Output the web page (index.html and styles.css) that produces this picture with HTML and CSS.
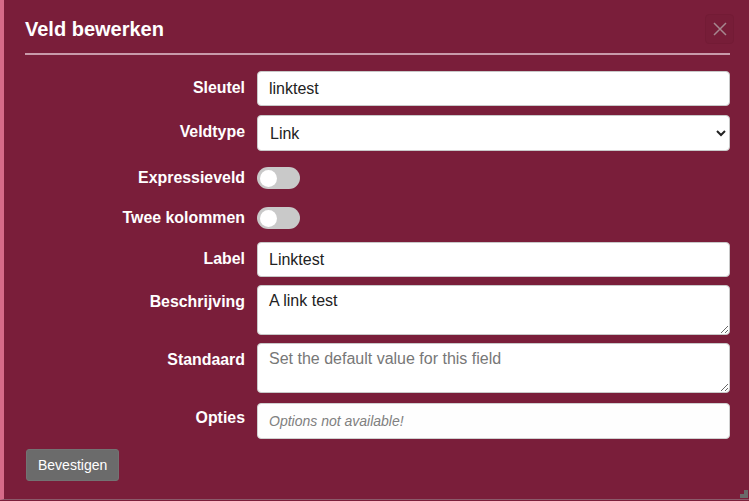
FILE: index.html
```html
<!DOCTYPE html>
<html lang="nl">
<head>
<meta charset="utf-8">
<title>Veld bewerken</title>
<link rel="stylesheet" href="styles.css">
</head>
<body>
<div class="modal">
  <div class="modal-header">
    <h1 class="modal-title">Veld bewerken</h1>
    <button class="close-btn" type="button" aria-label="Sluiten">
      <svg width="14" height="14" viewBox="0 0 14 14"><path d="M1 1 L13 13 M13 1 L1 13" stroke="#a6878f" stroke-width="1.5" fill="none"/></svg>
    </button>
  </div>
  <form class="form">
    <div class="row row-first">
      <label class="lbl">Sleutel</label>
      <input class="ctl" type="text" value="linktest">
    </div>
    <div class="row row-select">
      <label class="lbl">Veldtype</label>
      <select class="ctl sel"><option>Link</option></select>
    </div>
    <div class="row row-toggle t1">
      <label class="lbl">Expressieveld</label>
      <span class="toggle"><span class="knob"></span></span>
    </div>
    <div class="row row-toggle t2">
      <label class="lbl">Twee kolommen</label>
      <span class="toggle"><span class="knob"></span></span>
    </div>
    <div class="row row-label">
      <label class="lbl">Label</label>
      <input class="ctl" type="text" value="Linktest">
    </div>
    <div class="row row-area">
      <label class="lbl">Beschrijving</label>
      <textarea class="ctl area">A link test</textarea>
    </div>
    <div class="row row-area">
      <label class="lbl">Standaard</label>
      <textarea class="ctl area" placeholder="Set the default value for this field"></textarea>
    </div>
    <div class="row row-opt">
      <label class="lbl">Opties</label>
      <input class="ctl opt" type="text" placeholder="Options not available!" readonly>
    </div>
    <div class="actions">
      <button class="confirm" type="button">Bevestigen</button>
    </div>
  </form>
  <span class="grip"></span>
</div>
</body>
</html>
```
FILE: styles.css
```css
html, body {
  margin: 0;
  padding: 0;
  background: #7a1e3a;
  font-family: "Liberation Sans", Arial, sans-serif;
}
.modal {
  position: relative;
  box-sizing: border-box;
  height: 500px;
  border-left: 4px solid #d66b89;
  border-bottom: 1px solid #8a5a6a;
  background: #7a1e3a;
  padding: 14px 19px 0 21px;
}
.modal-header {
  display: flex;
  align-items: center;
  justify-content: space-between;
  height: 30px;
  padding-bottom: 9px;
  border-bottom: 2px solid #c99aaa;
}
.modal-title {
  margin: 0;
  font-size: 20px;
  line-height: 24px;
  font-weight: bold;
  color: #ffffff;
}
.close-btn {
  width: 29px;
  height: 30px;
  margin-right: -4px;
  padding: 0;
  display: flex;
  align-items: center;
  justify-content: center;
  background: #771d38;
  border: 1px solid #731b35;
  border-radius: 4px;
}
.form {
  display: flex;
  flex-direction: column;
}
.row {
  display: grid;
  grid-template-columns: 220px 473px;
  column-gap: 12px;
  align-items: start;
}
.row-first { margin-top: 16px; }
.row-select { margin-top: 9px; }
.row-toggle { align-items: center; }
.t1 { margin-top: 16px; }
.t2 { margin-top: 18px; }
.row-label { margin-top: 13px; }
.row-area { margin-top: 8px; }
.row-opt { margin-top: 10px; }
.lbl {
  text-align: right;
  color: #ffffff;
  font-weight: bold;
  font-size: 15.9px;
  line-height: 20px;
  padding-top: 7px;
}
.row-toggle .lbl { padding-top: 0; }
.row-opt .lbl { padding-top: 5px; }
.ctl {
  box-sizing: border-box;
  width: 473px;
  height: 35px;
  margin: 0;
  padding: 0 11px;
  border: 1px solid #c8c8c8;
  border-radius: 4px;
  background: #ffffff;
  color: #222222;
  font-family: "Liberation Sans", Arial, sans-serif;
  font-size: 16px;
}
.sel {
  height: 36px;
  padding-left: 8px;
}
.area {
  height: 50px;
  padding: 6px 11px;
  line-height: normal;
  resize: vertical;
}
.area::placeholder { color: #777777; }
.opt {
  height: 36px;
  background: #fefefe;
  border: 1px solid #d0d0d0;
  font-size: 14px;
  font-style: italic;
}
.opt::placeholder { color: #808080; }
.toggle {
  position: relative;
  display: block;
  width: 43px;
  height: 22px;
  border-radius: 11px;
  background: #c9c9c9;
}
.knob {
  position: absolute;
  left: 3px;
  top: 2.5px;
  width: 17px;
  height: 17px;
  border-radius: 50%;
  background: #ffffff;
}
.actions {
  margin-top: 10px;
}
.confirm {
  height: 32px;
  padding: 0 11px;
  margin-left: 1px;
  background: #6b6b6b;
  border: 1px solid #737373;
  border-radius: 3px;
  color: #ffffff;
  font-family: "Liberation Sans", Arial, sans-serif;
  font-size: 14px;
}
.grip {
  position: absolute;
  right: 1px;
  bottom: 1px;
  width: 8px;
  height: 8px;
  background: #6a6a6a;
  clip-path: polygon(100% 0, 100% 100%, 0 100%, 0 50%, 50% 50%, 50% 0);
}
```
